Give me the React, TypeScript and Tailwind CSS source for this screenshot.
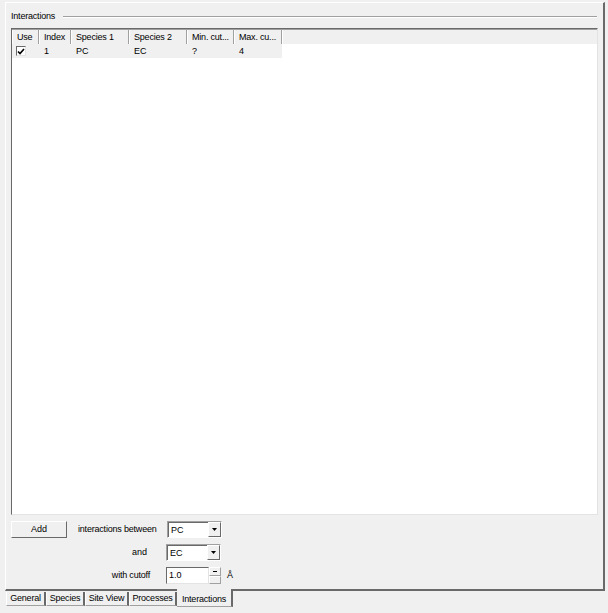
import React from "react";

type Col = { label: string; width: number };

const cols: Col[] = [
  { label: "Use", width: 27 },
  { label: "Index", width: 32 },
  { label: "Species 1", width: 58 },
  { label: "Species 2", width: 58 },
  { label: "Min. cut...", width: 47 },
  { label: "Max. cu...", width: 48 },
];

const rows = [{ use: true, index: "1", s1: "PC", s2: "EC", min: "?", max: "4" }];

const tabs = [
  { label: "General", width: 40 },
  { label: "Species", width: 39 },
  { label: "Site View", width: 44 },
  { label: "Processes", width: 48 },
  { label: "Interactions", width: 56 },
];

function Combo({ value }: { value: string }) {
  return (
    <div className="flex h-[17px] w-[55px] items-stretch border border-t-[#a0a0a0] border-l-[#a0a0a0] border-r-white border-b-white bg-white">
      <div className="flex flex-1 items-center border-l border-t border-[#696969] pl-[2px]">{value}</div>
      <div className="flex w-[13px] items-center justify-center border border-t-white border-l-white border-r-[#696969] border-b-[#696969] bg-[#f0f0f0]">
        <svg width="5" height="3" viewBox="0 0 5 3">
          <path d="M0 0h5L2.5 3z" fill="#000" />
        </svg>
      </div>
    </div>
  );
}

export default function App() {
  return (
    <div className="h-[613px] w-[608px] overflow-hidden bg-[#f0f0f0] pt-[2px] text-[9px] leading-none text-black [font-family:'Liberation_Sans',Arial,sans-serif]">
      <div className="ml-[5px] flex h-[589px] w-[600px] flex-col border-l border-t border-l-white border-t-white border-r-2 border-b-2 border-r-[#696969] border-b-[#696969]">
        {/* group header */}
        <div className="flex h-[25px] items-center gap-[8px] pl-[5px] pr-[6px] pt-[2px]">
          <span className="tracking-[-0.2px]">Interactions</span>
          <div className="h-[2px] flex-1 border-t border-b border-t-[#a0a0a0] border-b-white" />
        </div>

        {/* list */}
        <div className="ml-[5px] flex h-[487px] w-[587px] flex-col border border-t-[#696969] border-l-[#696969] border-r-[#e3e3e3] border-b-[#e3e3e3] bg-white">
          <div className="flex h-[15px] w-full border-t border-[#a0a0a0] bg-[#f0f0f0]">
            {cols.map((c) => (
              <div
                key={c.label}
                style={{ width: c.width }}
                className="flex items-center whitespace-nowrap border-r border-r-[#a0a0a0] border-l border-l-white pl-[4px] tracking-[-0.2px]"
              >
                {c.label}
              </div>
            ))}
            <div className="flex-1 border-l border-l-white" />
          </div>
          {rows.map((r) => (
            <div key={r.index} className="flex h-[14px] w-[270px] items-center bg-[#f0f0f0]">
              <div className="flex w-[27px] items-center pl-[4px]">
                <div className="flex h-[10px] w-[10px] items-center justify-center border border-t-[#696969] border-l-[#696969] border-r-[#e3e3e3] border-b-[#e3e3e3] bg-white">
                  {r.use && (
                    <svg width="8" height="7" viewBox="0 0 8 7">
                      <path d="M1 3.5l2 2L7 1" stroke="#000" strokeWidth="1.6" fill="none" />
                    </svg>
                  )}
                </div>
              </div>
              <div className="w-[32px] pl-[5px]">{r.index}</div>
              <div className="w-[58px] pl-[5px]">{r.s1}</div>
              <div className="w-[58px] pl-[5px]">{r.s2}</div>
              <div className="w-[47px] pl-[5px]">{r.min}</div>
              <div className="w-[48px] pl-[5px]">{r.max}</div>
            </div>
          ))}
        </div>

        {/* controls */}
        <div className="ml-[5px] mt-[6px] flex flex-col gap-[6px]">
          <div className="flex items-center">
            <button className="h-[17px] w-[56px] border border-t-white border-l-white border-r-[#696969] border-b-[#696969] bg-[#f0f0f0]">
              Add
            </button>
            <span className="ml-[11px] w-[78px] whitespace-nowrap tracking-[-0.2px]">interactions between</span>
            <div className="ml-[11px]">
              <Combo value="PC" />
            </div>
          </div>
          <div className="flex items-center">
            <span className="w-[136px] text-right">and</span>
            <div className="ml-[19px]">
              <Combo value="EC" />
            </div>
          </div>
          <div className="flex items-center">
            <span className="w-[139px] whitespace-nowrap text-right tracking-[-0.2px]">with cutoff</span>
            <div className="ml-[16px] flex h-[17px] items-stretch">
              <div className="flex w-[43px] items-center border border-t-[#696969] border-l-[#696969] border-r-[#e3e3e3] border-b-[#e3e3e3] bg-white pl-[2px]">
                1.0
              </div>
              <div className="flex w-[12px] flex-col">
                <div className="flex flex-1 items-center justify-center border border-t-white border-l-white border-r-[#a0a0a0] border-b-[#a0a0a0]">
                  <div className="h-[1px] w-[4px] bg-black" />
                </div>
                <div className="flex-1 border border-t-white border-l-white border-r-[#a0a0a0] border-b-[#a0a0a0]" />
              </div>
              <span className="ml-[6px] self-center">Å</span>
            </div>
          </div>
        </div>
      </div>

      {/* tabs */}
      <div className="-mt-[1px] flex pl-[6px]">
        {tabs.map((t) => {
          const sel = t.label === "Interactions";
          return (
            <div
              key={t.label}
              style={{ width: t.width }}
              className={
                sel
                  ? "-mt-[1px] flex h-[18px] items-end justify-center whitespace-nowrap border-r-2 border-b border-r-[#696969] border-b-[#a0a0a0] bg-[#f0f0f0] pb-[2px] tracking-[-0.2px]"
                  : "mt-[2px] flex h-[14px] items-center justify-center whitespace-nowrap border-l border-l-white border-r-2 border-r-[#696969] border-b border-b-[#a0a0a0] bg-[#f0f0f0] tracking-[-0.2px]"
              }
            >
              {t.label}
            </div>
          );
        })}
      </div>
    </div>
  );
}
